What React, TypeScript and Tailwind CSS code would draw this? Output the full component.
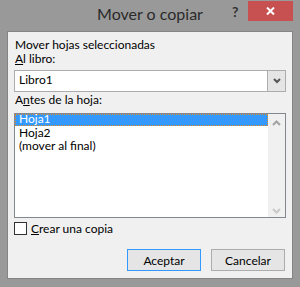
import React from "react";

const font = { fontFamily: 'Lato, "Noto Sans", sans-serif' };

export default function App() {
  return (
    <div className="w-[300px] h-[287px] bg-[#999999] flex flex-col text-[12px] text-black" style={font}>
      {/* title bar */}
      <div className="h-[31px] relative">
        <div className="absolute left-0 right-0 top-[3px] text-center text-[16px] text-[#2b2b2b] leading-[22px]">
          Mover o copiar
        </div>
        <div className="absolute left-[232px] top-[4px] text-[14px] font-bold text-[#333] leading-[16px]">?</div>
        <div className="absolute left-[248px] top-[1px] w-[45px] h-[20px] bg-[#c75050] flex items-center justify-center">
          <svg width="9" height="8" viewBox="0 0 9 8">
            <path d="M1 0.5 L8 7.5 M8 0.5 L1 7.5" stroke="white" strokeWidth="2" />
          </svg>
        </div>
      </div>
      {/* panel */}
      <div className="ml-[7px] w-[286px] h-[248px] border border-[#858585] bg-[#f0f0f0] px-[6px] flex flex-col">
        <div className="mt-[5px] h-[14px] leading-[15px] pl-[1px]">Mover hojas seleccionadas</div>
        <div className="h-[14px] leading-[15px] pl-[1px]"><span className="underline">A</span>l libro:</div>
        <div className="mt-[5px] h-[22px] border border-[#acacac] bg-white flex">
          <div className="flex-1 pl-[4px] leading-[17px]">Libro1</div>
          <div className="w-[18px] border-l border-[#acacac] bg-[#e5e5e5] flex items-center justify-center">
            <svg width="8" height="6" viewBox="0 0 8 6">
              <path d="M1 1 L4 4 L7 1" stroke="#555" strokeWidth="2" fill="none" />
            </svg>
          </div>
        </div>
        <div className="h-[15px] leading-[15px] pl-[1px]">A<span className="underline">n</span>tes de la hoja:</div>
        <div className="mt-[6px] h-[105px] border border-[#828790] bg-white flex">
          <div className="flex-1 flex flex-col">
            <div className="h-[12px] bg-[#3399ff] border border-dotted border-[#e08a2a] text-white pl-[3px] leading-[8px]">Hoja1</div>
            <div className="h-[13px] pl-[4px] leading-[13px]">Hoja2</div>
            <div className="h-[13px] pl-[4px] leading-[13px]">(mover al final)</div>
          </div>
          <div className="w-[17px] bg-[#f0f0f0] flex flex-col items-center justify-between pt-[6px] pb-[3px]">
            <svg width="9" height="6" viewBox="0 0 9 6">
              <path d="M1 5 L4.5 1.5 L8 5" stroke="#a3a3a3" strokeWidth="2" fill="none" />
            </svg>
            <svg width="9" height="6" viewBox="0 0 9 6">
              <path d="M1 1 L4.5 4.5 L8 1" stroke="#c9c9c9" strokeWidth="2" fill="none" />
            </svg>
          </div>
        </div>
        <div className="mt-[4px] h-[13px] flex items-center">
          <div className="w-[13px] h-[13px] border border-[#333] bg-white" />
          <div className="ml-[4px] leading-[15px]"><span className="underline">C</span>rear una copia</div>
        </div>
        <div className="mt-[14px] flex justify-end gap-[10px] pr-[1px]">
          <div className="w-[74px] h-[22px] border border-[#3399ff] bg-[#e5e5e5] flex items-center justify-center leading-[15px]">Aceptar</div>
          <div className="w-[74px] h-[22px] border border-[#acacac] bg-[#e5e5e5] flex items-center justify-center leading-[15px]">Cancelar</div>
        </div>
      </div>
    </div>
  );
}
